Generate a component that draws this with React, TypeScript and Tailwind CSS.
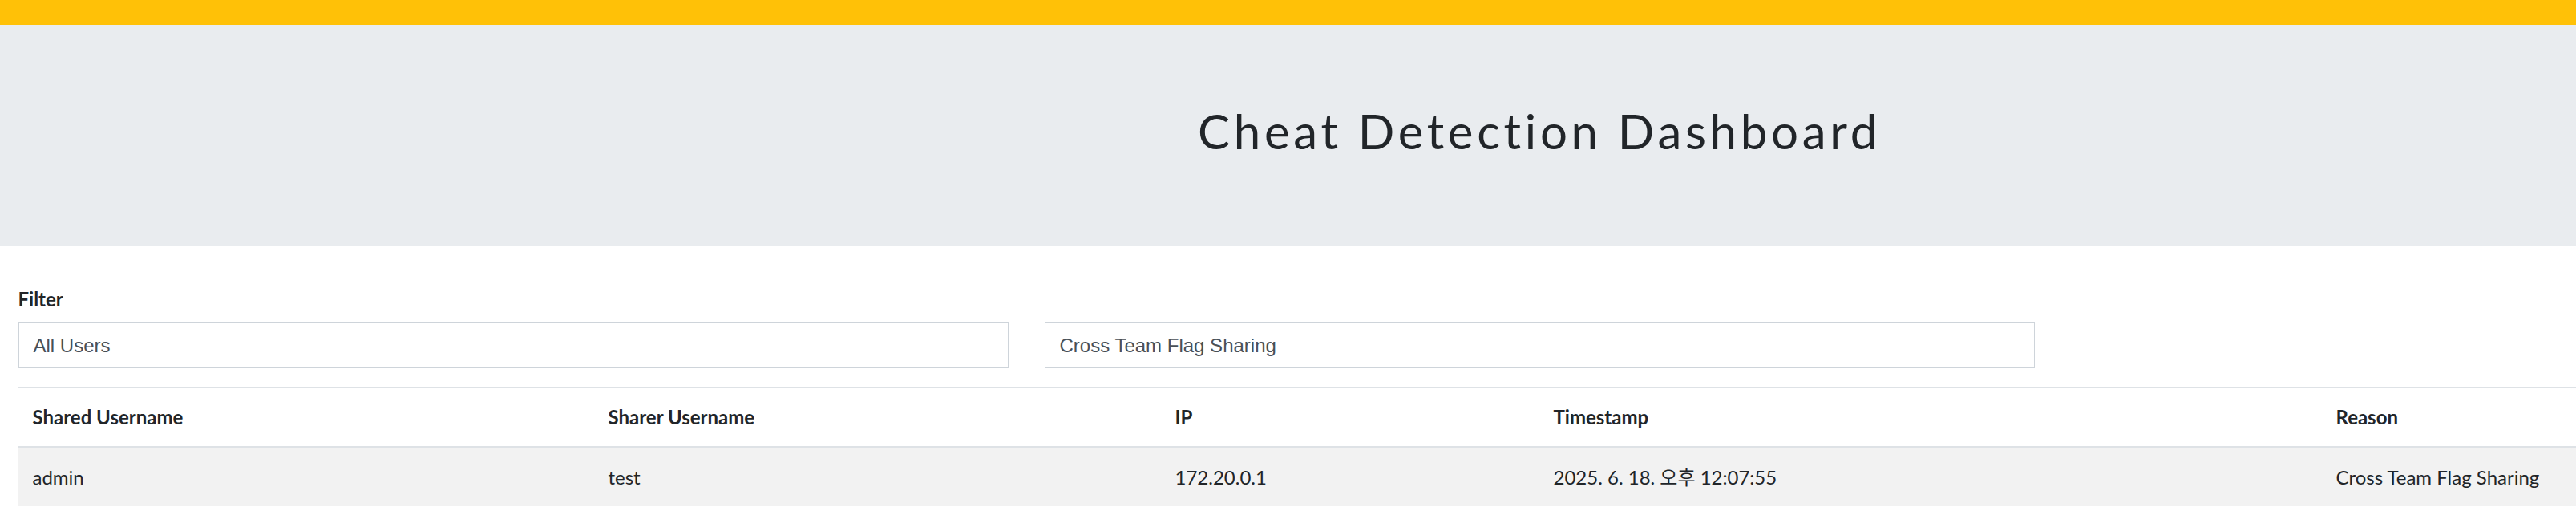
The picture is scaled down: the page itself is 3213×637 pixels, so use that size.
import React from "react";

const rows = [
  {
    shared: "admin",
    sharer: "test",
    ip: "172.20.0.1",
    ts: "2025. 6. 18. 오후 12:07:55",
    reason: "Cross Team Flag Sharing",
  },
];

export default function App() {
  return (
    <div
      className="w-full overflow-hidden bg-white text-[#212529]"
      style={{ fontFamily: 'Lato, "Noto Sans CJK KR", sans-serif' }}
    >
      <div className="w-[3840px]">
        <div className="h-[31px] bg-[#ffc107]" />
        <div className="bg-[#e9ecef] pt-[96px] pb-[96px]">
          <h1 className="mb-[12px] text-center text-[60px] font-normal leading-[72px] tracking-[4.7px] text-[#212529]">
            Cheat Detection Dashboard
          </h1>
        </div>

        <div className="px-[22.5px] pt-[48px]">
          <div className="mb-[11px] text-[24px] font-bold leading-[36px]">Filter</div>
          <div className="grid grid-cols-3 gap-[45px]">
            <div
              className="flex h-[57px] items-center border-[1.5px] border-[#ced4da] bg-white px-[18px] text-[24px] text-[#495057]"
              style={{ fontFamily: '"Liberation Sans", Arial, sans-serif' }}
            >
              All Users
            </div>
            <div
              className="flex h-[57px] items-center border-[1.5px] border-[#ced4da] bg-white px-[18px] text-[24px] text-[#495057]"
              style={{ fontFamily: '"Liberation Sans", Arial, sans-serif' }}
            >
              Cross Team Flag Sharing
            </div>
            <div />
          </div>

          <table className="mt-[24px] w-full table-fixed border-collapse text-[24px] leading-[36px]">
            <thead>
              <tr>
                <th className="w-[718px] border-t-[1.5px] border-b-[3px] border-[#dee2e6] px-[18px] py-[18px] text-left font-bold">
                  Shared Username
                </th>
                <th className="w-[707px] border-t-[1.5px] border-b-[3px] border-[#dee2e6] px-[18px] py-[18px] text-left font-bold">
                  Sharer Username
                </th>
                <th className="w-[472px] border-t-[1.5px] border-b-[3px] border-[#dee2e6] px-[18px] py-[18px] text-left font-bold">
                  IP
                </th>
                <th className="w-[976px] border-t-[1.5px] border-b-[3px] border-[#dee2e6] px-[18px] py-[18px] text-left font-bold">
                  Timestamp
                </th>
                <th className="border-t-[1.5px] border-b-[3px] border-[#dee2e6] px-[18px] py-[18px] text-left font-bold">
                  Reason
                </th>
              </tr>
            </thead>
            <tbody>
              {rows.map((r, i) => (
                <tr key={i} className="bg-[#f2f2f2]">
                  <td className="px-[18px] py-[18px]">{r.shared}</td>
                  <td className="px-[18px] py-[18px]">{r.sharer}</td>
                  <td className="px-[18px] py-[18px]">{r.ip}</td>
                  <td className="px-[18px] py-[18px]">{r.ts}</td>
                  <td className="px-[18px] py-[18px]">{r.reason}</td>
                </tr>
              ))}
            </tbody>
          </table>
        </div>
      </div>
    </div>
  );
}
